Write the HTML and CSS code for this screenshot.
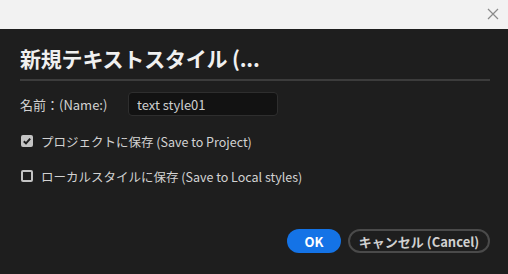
FILE: index.html
```html
<!DOCTYPE html>
<html lang="ja">
<head>
  <meta charset="UTF-8">
  <title>新規テキストスタイル</title>
  <link rel="stylesheet" href="styles.css">
</head>
<body>
  <div class="titlebar">
    <svg class="close" width="12" height="12" viewBox="0 0 12 12">
      <path d="M1 1 L11 11 M11 1 L1 11" stroke="#8a8a8a" stroke-width="1.2"/>
    </svg>
  </div>

  <div class="dialog">
    <h2>新規テキストスタイル (...</h2>

    <div class="form-row">
      <label for="name">名前：(Name:)</label>
      <input type="text" id="name" value="text style01">
    </div>

    <div class="check-row">
      <span class="box checked">
        <svg width="12" height="12" viewBox="0 0 12 12">
          <path d="M2.8 6.2 L5 8.4 L9.2 3.6" stroke="#1e1e1e" stroke-width="2" fill="none"/>
        </svg>
      </span>
      <span>プロジェクトに保存 (Save to Project)</span>
    </div>

    <div class="check-row">
      <span class="box"></span>
      <span>ローカルスタイルに保存 (Save to Local styles)</span>
    </div>

    <div class="buttons">
      <button class="btn-ok">OK</button>
      <button class="btn-cancel">キャンセル (Cancel)</button>
    </div>
  </div>
</body>
</html>
```

FILE: styles.css
```css
* {
  margin: 0;
  padding: 0;
  box-sizing: border-box;
  font-family: "Noto Sans CJK JP", "Noto Sans", sans-serif;
}

body {
  width: 508px;
  height: 274px;
  background-color: #1e1e1e;
  overflow: hidden;
}

.titlebar {
  height: 29px;
  background-color: #f2f2f2;
  display: flex;
  justify-content: flex-end;
  align-items: center;
  padding-right: 9px;
}

.close {
  margin-bottom: 1px;
}

.dialog {
  padding: 0 18px 0 20px;
}

h2 {
  color: #f0f0f0;
  font-size: 21px;
  font-weight: bold;
  line-height: 28px;
  padding-top: 15px;
  padding-bottom: 7px;
  border-bottom: 2px solid #3c3c3c;
  letter-spacing: -0.2px;
}

.form-row {
  display: flex;
  align-items: center;
  margin-top: 11px;
  height: 24px;
}

label {
  color: #d2d2d2;
  font-size: 13px;
  width: 108px;
}

input {
  width: 150px;
  height: 24px;
  background-color: #121212;
  border: 1px solid #2e2e2e;
  border-radius: 4px;
  color: #cfcfcf;
  font-size: 13px;
  padding: 0 8px;
  outline: none;
}

.check-row {
  display: flex;
  align-items: center;
  gap: 8px;
  color: #d2d2d2;
  font-size: 12.5px;
  height: 20px;
  margin-top: 15px;
  padding-left: 1px;
}

.check-row + .check-row {
  margin-top: 15px;
}

.box {
  width: 12px;
  height: 12px;
  border: 2px solid #c4c4c4;
  border-radius: 2px;
  display: flex;
  align-items: center;
  justify-content: center;
}

.box.checked {
  background-color: #c4c4c4;
}

.box svg {
  flex: none;
}

.buttons {
  display: flex;
  justify-content: flex-end;
  gap: 7px;
  margin-top: 43px;
}

button {
  height: 24px;
  border-radius: 12px;
  font-size: 13px;
  font-weight: bold;
}

.btn-ok {
  width: 54px;
  background-color: #1473e6;
  color: #ffffff;
  border: none;
}

.btn-cancel {
  width: 142px;
  background-color: transparent;
  color: #d0d0d0;
  border: 2px solid #4a4a4a;
}
```
